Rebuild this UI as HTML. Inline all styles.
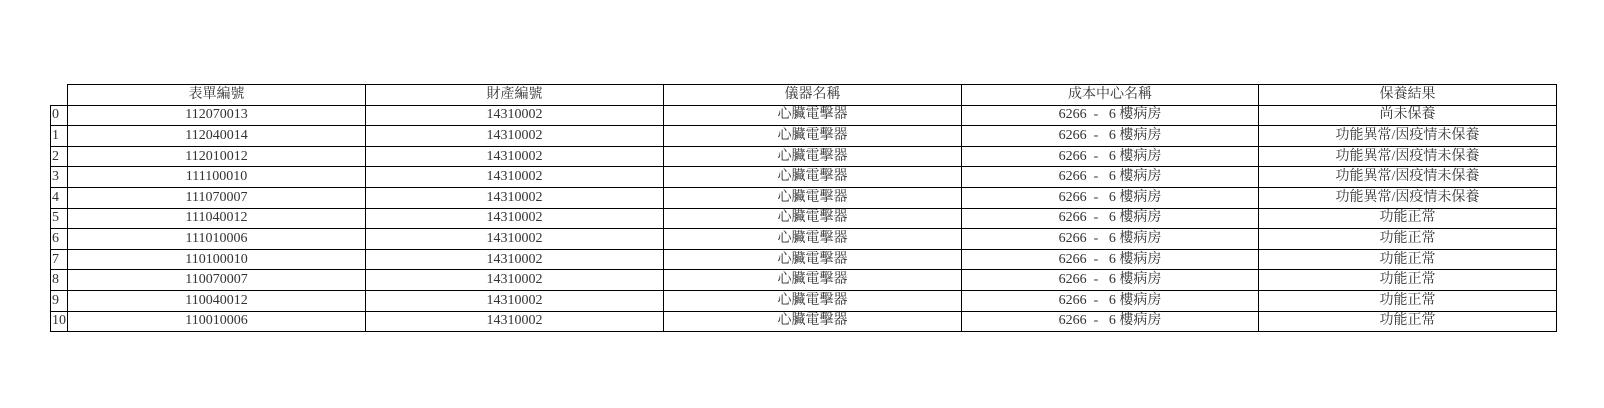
<!DOCTYPE html>
<html><head><meta charset="utf-8"><style>
body{margin:0;background:#fff;width:1604px;height:408px;overflow:hidden}
table{position:absolute;left:50px;top:84px;border-collapse:collapse;table-layout:fixed;font-family:"Liberation Serif","Noto Serif CJK SC",serif;font-size:14px;color:#333}
td{border:1.6px solid #000;height:19.6px;padding:0;text-align:center;line-height:18px;white-space:nowrap;overflow:hidden;vertical-align:middle}
td.i{text-align:left;padding-left:1px}
tr.h td.e{border:none}
</style></head><body>
<table>
<colgroup><col style="width:17px"><col style="width:298px"><col style="width:298px"><col style="width:298px"><col style="width:297px"><col style="width:298px"></colgroup>
<tr class="h"><td class="e"></td><td>表單編號</td><td>財產編號</td><td>儀器名稱</td><td>成本中心名稱</td><td>保養結果</td></tr>
<tr><td class="i">0</td><td>112070013</td><td>14310002</td><td>心臟電擊器</td><td>6266&nbsp; -&nbsp;&nbsp; 6 樓病房</td><td>尚未保養</td></tr>
<tr><td class="i">1</td><td>112040014</td><td>14310002</td><td>心臟電擊器</td><td>6266&nbsp; -&nbsp;&nbsp; 6 樓病房</td><td>功能異常/因疫情未保養</td></tr>
<tr><td class="i">2</td><td>112010012</td><td>14310002</td><td>心臟電擊器</td><td>6266&nbsp; -&nbsp;&nbsp; 6 樓病房</td><td>功能異常/因疫情未保養</td></tr>
<tr><td class="i">3</td><td>111100010</td><td>14310002</td><td>心臟電擊器</td><td>6266&nbsp; -&nbsp;&nbsp; 6 樓病房</td><td>功能異常/因疫情未保養</td></tr>
<tr><td class="i">4</td><td>111070007</td><td>14310002</td><td>心臟電擊器</td><td>6266&nbsp; -&nbsp;&nbsp; 6 樓病房</td><td>功能異常/因疫情未保養</td></tr>
<tr><td class="i">5</td><td>111040012</td><td>14310002</td><td>心臟電擊器</td><td>6266&nbsp; -&nbsp;&nbsp; 6 樓病房</td><td>功能正常</td></tr>
<tr><td class="i">6</td><td>111010006</td><td>14310002</td><td>心臟電擊器</td><td>6266&nbsp; -&nbsp;&nbsp; 6 樓病房</td><td>功能正常</td></tr>
<tr><td class="i">7</td><td>110100010</td><td>14310002</td><td>心臟電擊器</td><td>6266&nbsp; -&nbsp;&nbsp; 6 樓病房</td><td>功能正常</td></tr>
<tr><td class="i">8</td><td>110070007</td><td>14310002</td><td>心臟電擊器</td><td>6266&nbsp; -&nbsp;&nbsp; 6 樓病房</td><td>功能正常</td></tr>
<tr><td class="i">9</td><td>110040012</td><td>14310002</td><td>心臟電擊器</td><td>6266&nbsp; -&nbsp;&nbsp; 6 樓病房</td><td>功能正常</td></tr>
<tr><td class="i">10</td><td>110010006</td><td>14310002</td><td>心臟電擊器</td><td>6266&nbsp; -&nbsp;&nbsp; 6 樓病房</td><td>功能正常</td></tr>
</table>
</body></html>
